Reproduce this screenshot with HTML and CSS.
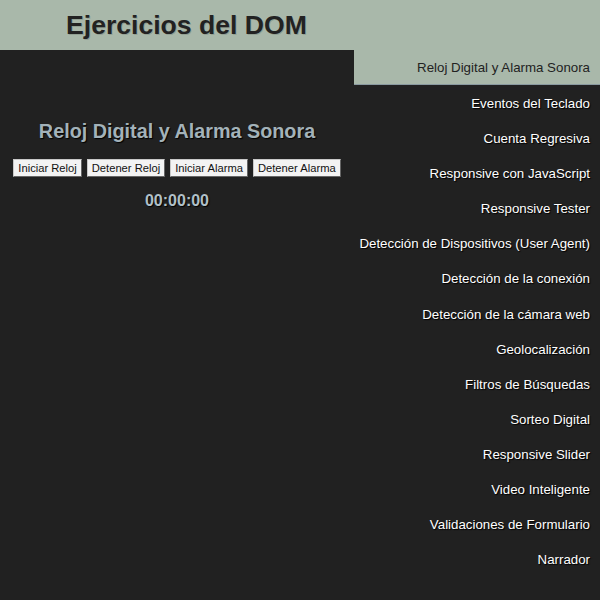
FILE: index.html
```html
<!DOCTYPE html>
<html lang="es">
<head>
<meta charset="utf-8">
<title>Ejercicios del DOM</title>
<link rel="stylesheet" href="styles.css">
</head>
<body>
<header class="header">
  <h1 class="title">Ejercicios del DOM</h1>
</header>
<div class="layout">
  <main class="main">
    <section class="section">
      <h3 class="section-title">Reloj Digital y Alarma Sonora</h3>
      <div class="buttons">
        <button class="btn">Iniciar Reloj</button>
        <button class="btn">Detener Reloj</button>
        <button class="btn">Iniciar Alarma</button>
        <button class="btn">Detener Alarma</button>
      </div>
      <div class="clock">00:00:00</div>
    </section>
  </main>
  <nav class="menu">
    <a class="menu-item active" href="#">Reloj Digital y Alarma Sonora</a>
    <a class="menu-item" href="#">Eventos del Teclado</a>
    <a class="menu-item" href="#">Cuenta Regresiva</a>
    <a class="menu-item" href="#">Responsive con JavaScript</a>
    <a class="menu-item" href="#">Responsive Tester</a>
    <a class="menu-item" href="#">Detección de Dispositivos (User Agent)</a>
    <a class="menu-item" href="#">Detección de la conexión</a>
    <a class="menu-item" href="#">Detección de la cámara web</a>
    <a class="menu-item" href="#">Geolocalización</a>
    <a class="menu-item" href="#">Filtros de Búsquedas</a>
    <a class="menu-item" href="#">Sorteo Digital</a>
    <a class="menu-item" href="#">Responsive Slider</a>
    <a class="menu-item" href="#">Video Inteligente</a>
    <a class="menu-item" href="#">Validaciones de Formulario</a>
    <a class="menu-item" href="#">Narrador</a>
  </nav>
</div>
</body>
</html>
```
FILE: styles.css
```css
* { box-sizing: border-box; }
html, body {
  margin: 0;
  padding: 0;
  height: 100%;
}
body {
  background: #212121;
  font-family: "Liberation Sans", Arial, sans-serif;
  color: #fff;
  overflow: hidden;
}
.header {
  background: #a9b8aa;
  height: 50px;
  display: flex;
  align-items: center;
  padding-left: 66px;
}
.title {
  margin: 0;
  font-size: 26.6px;
  font-weight: bold;
  color: #222;
  text-shadow: 1px 1px 0 rgba(0,0,0,0.15);
}
.layout {
  display: grid;
  grid-template-columns: 354px 246px;
}
.main {
  padding-top: 70px;
}
.section {
  display: flex;
  flex-direction: column;
  align-items: center;
}
.section-title {
  margin: 0;
  font-size: 19.8px;
  font-weight: bold;
  color: #a3b2b9;
  text-shadow: 1px 1px 1px #000;
  line-height: 23px;
}
.buttons {
  margin-top: 16px;
  display: flex;
  gap: 5px;
}
.btn {
  font-family: "Liberation Sans", Arial, sans-serif;
  font-size: 11.2px;
  color: #111;
  background: #f3f3f3;
  border: 1px solid #c8c8c8;
  border-right-color: #666;
  border-bottom-color: #666;
  padding: 1px 4px;
  line-height: 14px;
  border-radius: 0;
  white-space: nowrap;
}
.clock {
  margin-top: 15px;
  font-size: 16px;
  font-weight: bold;
  color: #b0c0c8;
  text-shadow: 1px 1px 1px #000;
}
.menu {
  display: flex;
  flex-direction: column;
}
.menu-item {
  display: block;
  height: 35.08px;
  line-height: 37px;
  text-align: right;
  padding-right: 10px;
  font-size: 13.3px;
  color: #fff;
  white-space: nowrap;
  text-decoration: none;
  text-shadow: 1px 1px 1px #000;
}
.menu-item.active {
  background: #a9b8aa;
  color: #222;
  text-shadow: none;
  border-bottom: 1px solid #8a9aa0;
  line-height: 35px;
}
```
